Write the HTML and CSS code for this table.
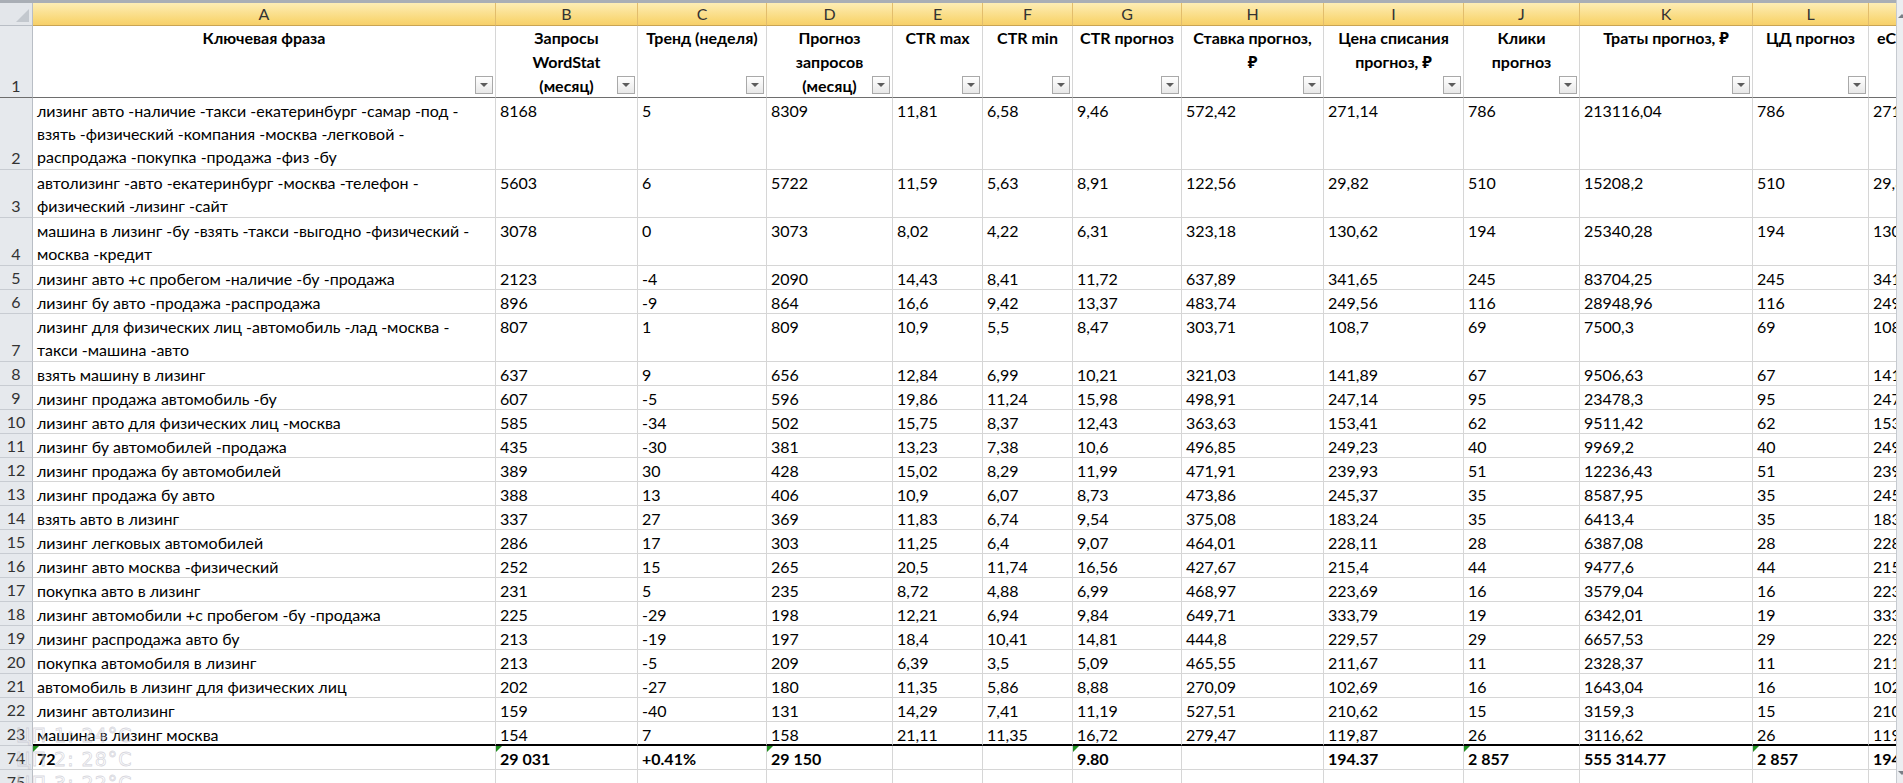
FILE: index.html
```html
<!DOCTYPE html>
<html lang="ru">
<head>
<meta charset="utf-8">
<title>Прогноз</title>
<link rel="stylesheet" href="styles.css">
</head>
<body>
<div class="viewport">
  <div class="sheetwrap">
    <div class="topline"></div>
    <div class="sheet">
      <div class="row colheads">
        <div class="corner"><span class="tri"></span></div>
        <div class="ch">A</div><div class="ch">B</div><div class="ch">C</div><div class="ch">D</div><div class="ch">E</div><div class="ch">F</div><div class="ch">G</div><div class="ch">H</div><div class="ch">I</div><div class="ch">J</div><div class="ch">K</div><div class="ch">L</div><div class="ch">M</div>
      </div>
      <div class="row head">
        <div class="rh">1</div>
        <div class="c hd">Ключевая фраза<span class="fb"></span></div>
        <div class="c hd">Запросы<br>WordStat<br>(месяц)<span class="fb"></span></div>
        <div class="c hd">Тренд (неделя)<span class="fb"></span></div>
        <div class="c hd">Прогноз<br>запросов<br>(месяц)<span class="fb"></span></div>
        <div class="c hd">CTR max<span class="fb"></span></div>
        <div class="c hd">CTR min<span class="fb"></span></div>
        <div class="c hd">CTR прогноз<span class="fb"></span></div>
        <div class="c hd">Ставка прогноз,<br>₽<span class="fb"></span></div>
        <div class="c hd">Цена списания<br>прогноз, ₽<span class="fb"></span></div>
        <div class="c hd">Клики<br>прогноз<span class="fb"></span></div>
        <div class="c hd">Траты прогноз, ₽<span class="fb"></span></div>
        <div class="c hd">ЦД прогноз<span class="fb"></span></div>
        <div class="c hd hdm">eCPC прогноз, ₽</div>
      </div>
      <div class="row"><div class="rh">2</div><div class="c">лизинг авто -наличие -такси -екатеринбург -самар -под -<br>взять -физический -компания -москва -легковой -<br>распродажа -покупка -продажа -физ -бу</div><div class="c">8168</div><div class="c">5</div><div class="c">8309</div><div class="c">11,81</div><div class="c">6,58</div><div class="c">9,46</div><div class="c">572,42</div><div class="c">271,14</div><div class="c">786</div><div class="c">213116,04</div><div class="c">786</div><div class="c">271,14</div></div>
      <div class="row"><div class="rh">3</div><div class="c">автолизинг -авто -екатеринбург -москва -телефон -<br>физический -лизинг -сайт</div><div class="c">5603</div><div class="c">6</div><div class="c">5722</div><div class="c">11,59</div><div class="c">5,63</div><div class="c">8,91</div><div class="c">122,56</div><div class="c">29,82</div><div class="c">510</div><div class="c">15208,2</div><div class="c">510</div><div class="c">29,82</div></div>
      <div class="row"><div class="rh">4</div><div class="c">машина в лизинг -бу -взять -такси -выгодно -физический -<br>москва -кредит</div><div class="c">3078</div><div class="c">0</div><div class="c">3073</div><div class="c">8,02</div><div class="c">4,22</div><div class="c">6,31</div><div class="c">323,18</div><div class="c">130,62</div><div class="c">194</div><div class="c">25340,28</div><div class="c">194</div><div class="c">130,62</div></div>
      <div class="row"><div class="rh">5</div><div class="c">лизинг авто +с пробегом -наличие -бу -продажа</div><div class="c">2123</div><div class="c">-4</div><div class="c">2090</div><div class="c">14,43</div><div class="c">8,41</div><div class="c">11,72</div><div class="c">637,89</div><div class="c">341,65</div><div class="c">245</div><div class="c">83704,25</div><div class="c">245</div><div class="c">341,65</div></div>
      <div class="row"><div class="rh">6</div><div class="c">лизинг бу авто -продажа -распродажа</div><div class="c">896</div><div class="c">-9</div><div class="c">864</div><div class="c">16,6</div><div class="c">9,42</div><div class="c">13,37</div><div class="c">483,74</div><div class="c">249,56</div><div class="c">116</div><div class="c">28948,96</div><div class="c">116</div><div class="c">249,56</div></div>
      <div class="row"><div class="rh">7</div><div class="c">лизинг для физических лиц -автомобиль -лад -москва -<br>такси -машина -авто</div><div class="c">807</div><div class="c">1</div><div class="c">809</div><div class="c">10,9</div><div class="c">5,5</div><div class="c">8,47</div><div class="c">303,71</div><div class="c">108,7</div><div class="c">69</div><div class="c">7500,3</div><div class="c">69</div><div class="c">108,7</div></div>
      <div class="row"><div class="rh">8</div><div class="c">взять машину в лизинг</div><div class="c">637</div><div class="c">9</div><div class="c">656</div><div class="c">12,84</div><div class="c">6,99</div><div class="c">10,21</div><div class="c">321,03</div><div class="c">141,89</div><div class="c">67</div><div class="c">9506,63</div><div class="c">67</div><div class="c">141,89</div></div>
      <div class="row"><div class="rh">9</div><div class="c">лизинг продажа автомобиль -бу</div><div class="c">607</div><div class="c">-5</div><div class="c">596</div><div class="c">19,86</div><div class="c">11,24</div><div class="c">15,98</div><div class="c">498,91</div><div class="c">247,14</div><div class="c">95</div><div class="c">23478,3</div><div class="c">95</div><div class="c">247,14</div></div>
      <div class="row"><div class="rh">10</div><div class="c">лизинг авто для физических лиц -москва</div><div class="c">585</div><div class="c">-34</div><div class="c">502</div><div class="c">15,75</div><div class="c">8,37</div><div class="c">12,43</div><div class="c">363,63</div><div class="c">153,41</div><div class="c">62</div><div class="c">9511,42</div><div class="c">62</div><div class="c">153,41</div></div>
      <div class="row"><div class="rh">11</div><div class="c">лизинг бу автомобилей -продажа</div><div class="c">435</div><div class="c">-30</div><div class="c">381</div><div class="c">13,23</div><div class="c">7,38</div><div class="c">10,6</div><div class="c">496,85</div><div class="c">249,23</div><div class="c">40</div><div class="c">9969,2</div><div class="c">40</div><div class="c">249,23</div></div>
      <div class="row"><div class="rh">12</div><div class="c">лизинг продажа бу автомобилей</div><div class="c">389</div><div class="c">30</div><div class="c">428</div><div class="c">15,02</div><div class="c">8,29</div><div class="c">11,99</div><div class="c">471,91</div><div class="c">239,93</div><div class="c">51</div><div class="c">12236,43</div><div class="c">51</div><div class="c">239,93</div></div>
      <div class="row"><div class="rh">13</div><div class="c">лизинг продажа бу авто</div><div class="c">388</div><div class="c">13</div><div class="c">406</div><div class="c">10,9</div><div class="c">6,07</div><div class="c">8,73</div><div class="c">473,86</div><div class="c">245,37</div><div class="c">35</div><div class="c">8587,95</div><div class="c">35</div><div class="c">245,37</div></div>
      <div class="row"><div class="rh">14</div><div class="c">взять авто в лизинг</div><div class="c">337</div><div class="c">27</div><div class="c">369</div><div class="c">11,83</div><div class="c">6,74</div><div class="c">9,54</div><div class="c">375,08</div><div class="c">183,24</div><div class="c">35</div><div class="c">6413,4</div><div class="c">35</div><div class="c">183,24</div></div>
      <div class="row"><div class="rh">15</div><div class="c">лизинг легковых автомобилей</div><div class="c">286</div><div class="c">17</div><div class="c">303</div><div class="c">11,25</div><div class="c">6,4</div><div class="c">9,07</div><div class="c">464,01</div><div class="c">228,11</div><div class="c">28</div><div class="c">6387,08</div><div class="c">28</div><div class="c">228,11</div></div>
      <div class="row"><div class="rh">16</div><div class="c">лизинг авто москва -физический</div><div class="c">252</div><div class="c">15</div><div class="c">265</div><div class="c">20,5</div><div class="c">11,74</div><div class="c">16,56</div><div class="c">427,67</div><div class="c">215,4</div><div class="c">44</div><div class="c">9477,6</div><div class="c">44</div><div class="c">215,4</div></div>
      <div class="row"><div class="rh">17</div><div class="c">покупка авто в лизинг</div><div class="c">231</div><div class="c">5</div><div class="c">235</div><div class="c">8,72</div><div class="c">4,88</div><div class="c">6,99</div><div class="c">468,97</div><div class="c">223,69</div><div class="c">16</div><div class="c">3579,04</div><div class="c">16</div><div class="c">223,69</div></div>
      <div class="row"><div class="rh">18</div><div class="c">лизинг автомобили +с пробегом -бу -продажа</div><div class="c">225</div><div class="c">-29</div><div class="c">198</div><div class="c">12,21</div><div class="c">6,94</div><div class="c">9,84</div><div class="c">649,71</div><div class="c">333,79</div><div class="c">19</div><div class="c">6342,01</div><div class="c">19</div><div class="c">333,79</div></div>
      <div class="row"><div class="rh">19</div><div class="c">лизинг распродажа авто бу</div><div class="c">213</div><div class="c">-19</div><div class="c">197</div><div class="c">18,4</div><div class="c">10,41</div><div class="c">14,81</div><div class="c">444,8</div><div class="c">229,57</div><div class="c">29</div><div class="c">6657,53</div><div class="c">29</div><div class="c">229,57</div></div>
      <div class="row"><div class="rh">20</div><div class="c">покупка автомобиля в лизинг</div><div class="c">213</div><div class="c">-5</div><div class="c">209</div><div class="c">6,39</div><div class="c">3,5</div><div class="c">5,09</div><div class="c">465,55</div><div class="c">211,67</div><div class="c">11</div><div class="c">2328,37</div><div class="c">11</div><div class="c">211,67</div></div>
      <div class="row"><div class="rh">21</div><div class="c">автомобиль в лизинг для физических лиц</div><div class="c">202</div><div class="c">-27</div><div class="c">180</div><div class="c">11,35</div><div class="c">5,86</div><div class="c">8,88</div><div class="c">270,09</div><div class="c">102,69</div><div class="c">16</div><div class="c">1643,04</div><div class="c">16</div><div class="c">102,69</div></div>
      <div class="row"><div class="rh">22</div><div class="c">лизинг автолизинг</div><div class="c">159</div><div class="c">-40</div><div class="c">131</div><div class="c">14,29</div><div class="c">7,41</div><div class="c">11,19</div><div class="c">527,51</div><div class="c">210,62</div><div class="c">15</div><div class="c">3159,3</div><div class="c">15</div><div class="c">210,62</div></div>
      <div class="row last"><div class="rh">23</div><div class="c">машина в лизинг москва</div><div class="c">154</div><div class="c">7</div><div class="c">158</div><div class="c">21,11</div><div class="c">11,35</div><div class="c">16,72</div><div class="c">279,47</div><div class="c">119,87</div><div class="c">26</div><div class="c">3116,62</div><div class="c">26</div><div class="c">119,87</div></div>
      <div class="row total"><div class="rh">74</div><div class="c note">72</div><div class="c note">29 031</div><div class="c">+0.41%</div><div class="c note">29 150</div><div class="c"></div><div class="c"></div><div class="c note">9.80</div><div class="c"></div><div class="c">194.37</div><div class="c note">2 857</div><div class="c">555 314.77</div><div class="c note">2 857</div><div class="c">194.37</div></div>
      <div class="row"><div class="rh">75</div><div class="c"></div><div class="c"></div><div class="c"></div><div class="c"></div><div class="c"></div><div class="c"></div><div class="c"></div><div class="c"></div><div class="c"></div><div class="c"></div><div class="c"></div><div class="c"></div><div class="c"></div></div>
    </div>
    <div class="ghost">
      <div class="gl">ЦП 1: 24°C</div>
      <div class="gl">ЦП 2: 28°C</div>
      <div class="gl">ЦП 3: 22°C</div>
    </div>
  </div>
  <div class="vscroll"><span class="arr up"></span><span class="arr down"></span></div>
</div>
</body>
</html>
```

FILE: styles.css
```css
* { box-sizing: border-box; }
html, body { margin: 0; padding: 0; background: #fff; }
body {
  font-family: "Lato", "Open Sans", "Noto Sans", sans-serif;
  font-size: 16px;
  color: #000;
  overflow: hidden;
}
.viewport {
  display: flex;
  width: 1903px;
  height: 783px;
  overflow: hidden;
}
.sheetwrap {
  position: relative;
  flex: 1;
  min-width: 0;
  overflow: hidden;
}
.topline {
  height: 3px;
  background: #a9aeb5;
}
.sheet {
  display: grid;
  grid-template-columns: 33px 463px 142px 129px 126px 90px 90px 109px 142px 140px 116px 173px 116px 140px;
  grid-template-rows: 23px 72px 72px 48px 48px 24px 24px 48px repeat(16, 24px) 24px 24px;
  width: 2009px;
}
.row { display: contents; }

/* column letters */
.corner {
  position: relative;
  background: #e3e6ea;
  border-right: 1px solid #b9bec5;
  border-bottom: 1px solid #b9bec5;
}
.corner .tri {
  position: absolute;
  right: 3px;
  bottom: 3px;
  width: 13px;
  height: 13px;
  background: #c3c8ce;
  clip-path: polygon(100% 0, 100% 100%, 0 100%);
}
.ch {
  background: linear-gradient(#fdedb5, #f9d878 75%, #f7d06a);
  border-right: 1px solid #e2bd6c;
  border-bottom: 1px solid #c9a453;
  color: #333;
  text-align: center;
  line-height: 22px;
  font-size: 16px;
}

/* row numbers */
.rh {
  background: #e6e9ed;
  border-right: 1px solid #b9bec5;
  border-bottom: 1px solid #c8ccd2;
  color: #333;
  display: flex;
  align-items: flex-end;
  justify-content: center;
  line-height: 23px;
  font-size: 16px;
}

/* cells */
.c {
  position: relative;
  border-right: 1px solid #d6d6d6;
  border-bottom: 1px solid #d6d6d6;
  padding: 1px 4px 0;
  line-height: 23px;
  white-space: nowrap;
  overflow: hidden;
}
.head .c, .head .rh { border-bottom: 1px solid #6e6e6e; }
.hd {
  font-weight: 700;
  text-align: center;
  line-height: 24px;
  padding-top: 0;
}
.hdm { text-align: left; padding-left: 8px; }
.fb {
  position: absolute;
  right: 2px;
  bottom: 3px;
  width: 18px;
  height: 18px;
  border: 1px solid #a9a9a9;
  background: linear-gradient(#ffffff, #e8e8e8);
}
.fb::after {
  content: "";
  position: absolute;
  left: 4px;
  top: 6px;
  border-left: 4px solid transparent;
  border-right: 4px solid transparent;
  border-top: 4px solid #5c5c5c;
}
.last .c { border-bottom: 2px solid #000; }
.total .c { font-weight: 700; }
.note::before {
  content: "";
  position: absolute;
  left: 0;
  top: 0;
  border-top: 6px solid #1f8f1f;
  border-right: 6px solid transparent;
}

/* faint overlay text of a desktop gadget showing through */
.ghost {
  position: absolute;
  left: 16px;
  top: 723px;
  pointer-events: none;
}
.gl {
  height: 24px;
  line-height: 24px;
  font-family: "DejaVu Sans", sans-serif;
  font-size: 19px;
  letter-spacing: 1px;
  color: rgba(255, 255, 255, 0.35);
  -webkit-text-stroke: 0.8px rgba(175, 175, 190, 0.5);
}

/* vertical scrollbar edge */
.vscroll {
  position: relative;
  width: 7px;
  flex: none;
  background: #eceef1;
  border-left: 1px solid #c6cad0;
}
.arr {
  position: absolute;
  left: 1px;
  border-left: 4px solid transparent;
  border-right: 4px solid transparent;
}
.arr.up { top: 14px; border-bottom: 4px solid #7a7f86; }
.arr.down { bottom: 8px; border-top: 4px solid #7a7f86; }
```
